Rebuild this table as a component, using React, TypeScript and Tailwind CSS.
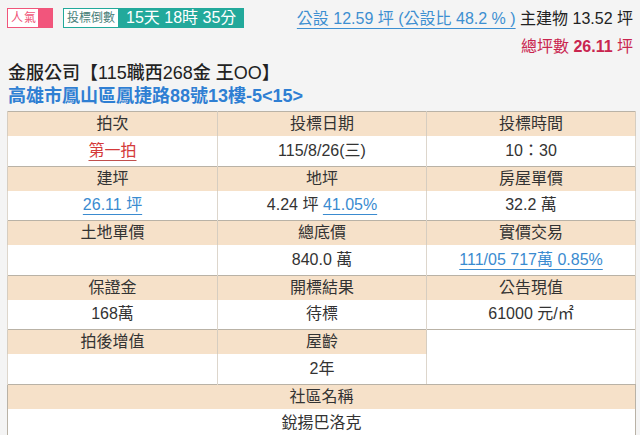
const font = { fontFamily: '"Liberation Sans", "Noto Sans CJK TC", sans-serif' };

type Cell = { label: string; value: React.ReactNode };

function Pair({ cells }: { cells: Cell[] }) {
  return (
    <>
      <tr className="h-[24px] bg-[#f6e1c9]">
        {cells.map((c, i) => (
          <th key={i} className="border-x border-[#d6cdc0] font-normal text-center">
            {c.label}
          </th>
        ))}
      </tr>
      <tr className="h-[30px] bg-white border-b border-[#b9b2a6]">
        {cells.map((c, i) => (
          <td key={i} className="border-x border-[#ddd6cc] text-center">
            {c.value}
          </td>
        ))}
      </tr>
    </>
  );
}

const link = "text-[#3a8bd0] underline decoration-[#3a8bd0] underline-offset-[4px]";

export default function App() {
  return (
    <div style={font} className="w-[640px] h-[435px] overflow-hidden bg-[#f4f4f4] px-[7px] pt-[8px] text-[#333]">
      <div className="flex justify-between">
        <div className="flex items-start gap-[10px]">
          <div className="flex h-[20px] w-[46px] border border-[#f0557a] bg-white">
            <span className="pl-[3px] text-[12px] leading-[18px] tracking-[1px] text-[#f0557a]">人氣</span>
            <span className="ml-auto w-[14px] bg-[#f2557c]" />
          </div>
          <div className="flex h-[20px] border border-[#22a99b]">
            <span className="w-[54px] bg-white text-center text-[12px] leading-[18px] text-[#4a7f7a]">投標倒數</span>
            <span className="w-[125px] bg-[#22a99b] pl-[8px] text-[16px] leading-[18px] text-white">15天 18時 35分</span>
          </div>
        </div>
        <div className="text-right text-[16px] leading-[18px] pt-[2px]">
          <div>
            <span className="text-[#3d8fd1] underline decoration-[#3d8fd1] underline-offset-[4px]">公設 12.59 坪 (公設比 48.2 % )</span>{" "}
            <span className="text-[#222]">主建物 13.52 坪</span>
          </div>
          <div className="mt-[10px] text-[#c9254f]">
            總坪數 <span className="font-bold">26.11</span> 坪
          </div>
        </div>
      </div>

      <div className="mt-[6px] text-[18px] leading-[23px] font-medium text-[#222] pl-[1px]">金服公司【115職西268金 王OO】</div>
      <div className="text-[18px] leading-[23px] font-bold text-[#2f7fd3] pl-[1px]">高雄市鳳山區鳳捷路88號13樓-5&lt;15&gt;</div>

      <table className="mt-[3px] w-[628px] table-fixed border-collapse border border-[#b9b2a6] text-[16px] text-[#333]">
        <colgroup>
          <col className="w-[210px]" />
          <col className="w-[209px]" />
          <col className="w-[209px]" />
        </colgroup>
        <tbody>
          <Pair
            cells={[
              { label: "拍次", value: <span className="text-[#d43a3a] underline decoration-[#c0504d] underline-offset-[4px]">第一拍</span> },
              { label: "投標日期", value: "115/8/26(三)" },
              { label: "投標時間", value: "10：30" },
            ]}
          />
          <Pair
            cells={[
              { label: "建坪", value: <span className={link}>26.11 坪</span> },
              { label: "地坪", value: <span>4.24 坪 <span className={link}>41.05%</span></span> },
              { label: "房屋單價", value: "32.2 萬" },
            ]}
          />
          <Pair
            cells={[
              { label: "土地單價", value: "" },
              { label: "總底價", value: "840.0 萬" },
              { label: "實價交易", value: <span className={link}>111/05 717萬 0.85%</span> },
            ]}
          />
          <Pair
            cells={[
              { label: "保證金", value: "168萬" },
              { label: "開標結果", value: "待標" },
              { label: "公告現值", value: <span>61000 元/㎡</span> },
            ]}
          />
          <tr className="h-[24px]">
            <th className="border-x border-[#d6cdc0] bg-[#f6e1c9] font-normal text-center">拍後增值</th>
            <th className="border-x border-[#d6cdc0] bg-[#f6e1c9] font-normal text-center">屋齡</th>
            <td rowSpan={2} className="border-x border-b border-[#ddd6cc] border-b-[#b9b2a6] bg-white" />
          </tr>
          <tr className="h-[30px] bg-white border-b border-[#b9b2a6]">
            <td className="border-x border-[#ddd6cc]" />
            <td className="border-x border-[#ddd6cc] text-center">2年</td>
          </tr>
          <tr className="h-[24px] bg-[#f6e1c9]">
            <th colSpan={3} className="font-normal text-center">社區名稱</th>
          </tr>
          <tr className="h-[30px] bg-white">
            <td colSpan={3} className="text-center">銳揚巴洛克</td>
          </tr>
        </tbody>
      </table>
    </div>
  );
}
